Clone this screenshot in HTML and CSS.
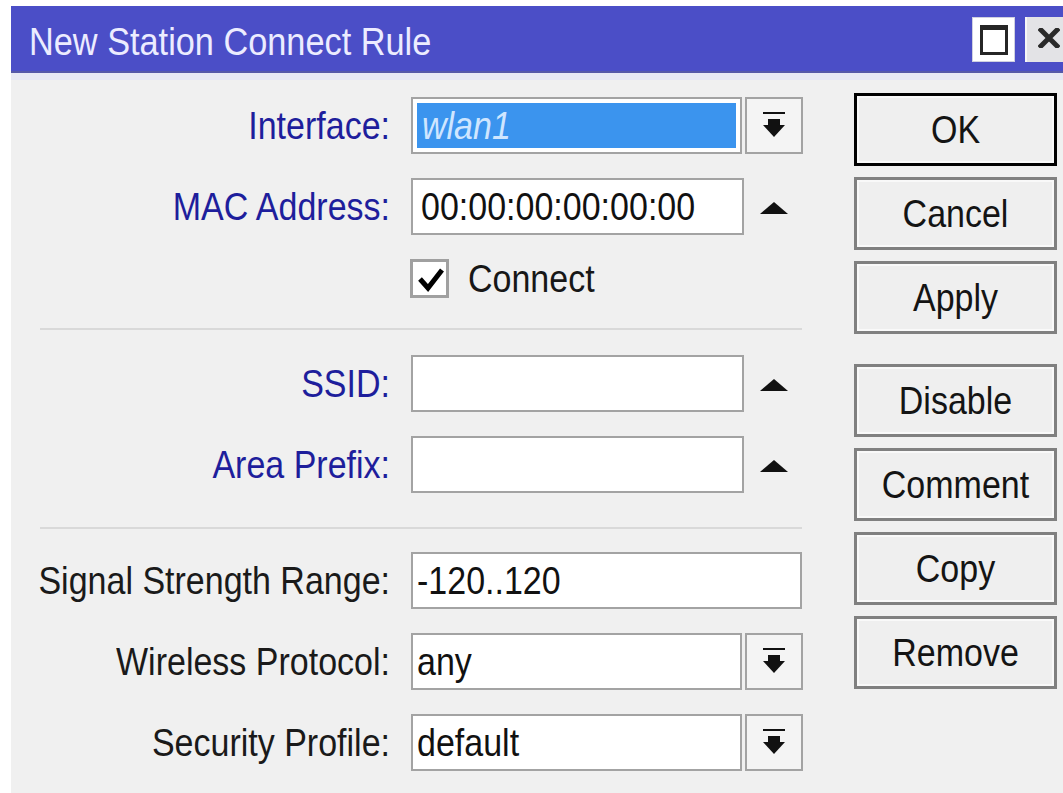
FILE: index.html
```html
<!DOCTYPE html>
<html lang="en">
<head>
<meta charset="utf-8">
<title>New Station Connect Rule</title>
<link rel="stylesheet" href="styles.css">
</head>
<body>
<div class="window">
  <div class="titlebar">
    <span class="title tall">New Station Connect Rule</span>
    <div class="tb-btns">
      <span class="tb-btn tb-max">
        <svg width="28" height="30" viewBox="0 0 28 30">
          <rect x="1.5" y="1.5" width="25" height="27" fill="#fff" stroke="#262626" stroke-width="3"/>
          <rect x="0" y="0" width="28" height="5" fill="#262626"/>
        </svg>
      </span>
      <span class="tb-btn tb-close">
        <svg width="22" height="20" viewBox="0 0 22 20">
          <path d="M3 2 L19 18 M19 2 L3 18" stroke="#2a2a2a" stroke-width="5" stroke-linecap="square"/>
        </svg>
      </span>
    </div>
  </div>

  <div class="content">
    <div class="form">
      <div class="group">
        <div class="row">
          <span class="label req"><span class="tall">Interface:</span></span>
          <span class="field select selected"><span class="val"><span class="tall">wlan1</span></span></span>
          <span class="dd-btn">
            <svg width="22" height="25" viewBox="0 0 22 25"><rect x="0" y="0" width="22" height="2" fill="#111"/><rect x="5" y="7" width="12" height="7" fill="#111"/><polygon points="0,13 22,13 11,25" fill="#111"/></svg>
          </span>
        </div>
        <div class="row">
          <span class="label req"><span class="tall">MAC Address:</span></span>
          <span class="field mac"><span class="tall">00:00:00:00:00:00</span></span>
          <span class="up-btn">
            <svg width="28" height="12" viewBox="0 0 28 12"><polygon points="0,12 28,12 14,0" fill="#111"/></svg>
          </span>
        </div>
        <div class="row row-check">
          <span class="label"></span>
          <span class="check-wrap">
            <span class="checkbox">
              <svg width="33" height="33" viewBox="0 0 33 33"><polyline points="7,17 15,26 29,8" fill="none" stroke="#000" stroke-width="5"/></svg>
            </span>
            <span class="tall">Connect</span>
          </span>
        </div>
      </div>

      <div class="sep sep-1"></div>

      <div class="group group-2">
        <div class="row">
          <span class="label req"><span class="tall">SSID:</span></span>
          <span class="field"></span>
          <span class="up-btn">
            <svg width="28" height="12" viewBox="0 0 28 12"><polygon points="0,12 28,12 14,0" fill="#111"/></svg>
          </span>
        </div>
        <div class="row">
          <span class="label req"><span class="tall">Area Prefix:</span></span>
          <span class="field"></span>
          <span class="up-btn">
            <svg width="28" height="12" viewBox="0 0 28 12"><polygon points="0,12 28,12 14,0" fill="#111"/></svg>
          </span>
        </div>
      </div>

      <div class="sep sep-2"></div>

      <div class="group group-3">
        <div class="row">
          <span class="label"><span class="tall">Signal Strength Range:</span></span>
          <span class="field wide"><span class="tall">-120..120</span></span>
        </div>
        <div class="row">
          <span class="label"><span class="tall">Wireless Protocol:</span></span>
          <span class="field select"><span class="tall">any</span></span>
          <span class="dd-btn">
            <svg width="22" height="25" viewBox="0 0 22 25"><rect x="0" y="0" width="22" height="2" fill="#111"/><rect x="5" y="7" width="12" height="7" fill="#111"/><polygon points="0,13 22,13 11,25" fill="#111"/></svg>
          </span>
        </div>
        <div class="row">
          <span class="label"><span class="tall">Security Profile:</span></span>
          <span class="field select"><span class="tall">default</span></span>
          <span class="dd-btn">
            <svg width="22" height="25" viewBox="0 0 22 25"><rect x="0" y="0" width="22" height="2" fill="#111"/><rect x="5" y="7" width="12" height="7" fill="#111"/><polygon points="0,13 22,13 11,25" fill="#111"/></svg>
          </span>
        </div>
      </div>
    </div>

    <div class="actions">
      <button class="btn btn-default"><span class="tall">OK</span></button>
      <button class="btn"><span class="tall">Cancel</span></button>
      <button class="btn"><span class="tall">Apply</span></button>
      <button class="btn btn-spaced"><span class="tall">Disable</span></button>
      <button class="btn"><span class="tall">Comment</span></button>
      <button class="btn"><span class="tall">Copy</span></button>
      <button class="btn"><span class="tall">Remove</span></button>
    </div>
  </div>
</div>
</body>
</html>
```

FILE: styles.css
```css
* {
  box-sizing: border-box;
}

html,
body {
  margin: 0;
  padding: 0;
  background: #ffffff;
  overflow: hidden;
}

body {
  width: 1063px;
  height: 793px;
  font-family: "Liberation Sans", Arial, sans-serif;
  font-size: 34px;
  color: #171717;
}

/* slightly taller glyphs, as the dialog font renders */
.tall {
  display: inline-block;
  transform: scaleY(1.14);
  white-space: nowrap;
}

.window {
  margin: 6px 0 0 11px;
  width: 1062px;
  height: 800px;
  background: #f0f0f0;
}

/* ---------- title bar ---------- */
.titlebar {
  height: 67px;
  background: #4b4ec7;
  border-bottom: 2px solid #5658a8;
  display: flex;
  align-items: center;
  justify-content: space-between;
  padding: 0 3px 0 18px;
}

.title {
  margin-top: 6px;
  color: #ececff;
  font-size: 34.3px;
}

.tb-btns {
  align-self: flex-start;
  margin-top: 11px;
  display: flex;
  gap: 10px;
}

.tb-btn {
  height: 45px;
  display: flex;
  align-items: center;
  justify-content: center;
}

.tb-max {
  width: 43px;
  background: #ffffff;
  border: 1px solid #cfd0e0;
}

.tb-close {
  width: 45px;
  background: #e3e3e6;
  border-left: 2px solid #f6f6f6;
  padding-bottom: 4px;
}

/* ---------- body ---------- */
.content {
  display: flex;
  border-top: 7px solid #e8e8f4;
}

.form {
  width: 792px;
  padding-top: 17px;
}

.group {
  display: flex;
  flex-direction: column;
  gap: 24px;
}

.group-2 {
  margin-top: 25px;
}

.group-3 {
  margin-top: 23px;
}

.row {
  display: grid;
  grid-template-columns: 400px 333px 59px;
  height: 57px;
  align-items: center;
}

.row-check {
  height: 39px;
}

.label {
  text-align: right;
  padding-right: 21px;
  color: #1a1a1a;
}

.label.req {
  color: #1e1e9c;
}

.field {
  height: 57px;
  background: #ffffff;
  border: 2px solid #a3a3a3;
  display: flex;
  align-items: center;
  padding-left: 4px;
  color: #111111;
}

.field.select {
  width: 331px;
}

.field.mac {
  padding-left: 8px;
}

.field.wide {
  grid-column: 2 / 4;
  width: 391px;
}

.field.selected {
  padding: 4px;
}

.field.selected .val {
  width: 100%;
  height: 100%;
  background: #3b94ee;
  color: #cfe6ff;
  font-style: italic;
  display: flex;
  align-items: center;
  padding-left: 5px;
}

.dd-btn {
  margin-left: 1px;
  width: 58px;
  height: 57px;
  border: 2px solid #a3a3a3;
  background: #f4f4f4;
  display: flex;
  align-items: flex-start;
  justify-content: center;
  padding-top: 13px;
}

.up-btn {
  display: flex;
  justify-content: center;
  padding-top: 3px;
}

.check-wrap {
  grid-column: 2 / 4;
  margin-left: -1px;
  display: flex;
  align-items: center;
  gap: 19px;
}

.checkbox {
  width: 39px;
  height: 39px;
  background: #ffffff;
  border: 3px solid #a0a0a0;
  display: flex;
}

.sep {
  height: 2px;
  width: 762px;
  margin-left: 29px;
  background: #d9d9d9;
}

.sep-1 {
  margin-top: 30px;
}

.sep-2 {
  margin-top: 34px;
}

/* ---------- action buttons ---------- */
.actions {
  margin-left: 51px;
  width: 203px;
  padding-top: 13px;
  display: flex;
  flex-direction: column;
  gap: 11px;
}

.btn {
  height: 73px;
  width: 203px;
  padding: 0;
  margin: 0;
  font: inherit;
  color: #141414;
  background: #efefef;
  border: 3px solid #808080;
  box-shadow: inset 0 0 0 2px #f9f9f9;
  display: flex;
  align-items: center;
  justify-content: center;
}

.btn-default {
  border-color: #000000;
}

.btn-spaced {
  margin-top: 19px;
}
```
